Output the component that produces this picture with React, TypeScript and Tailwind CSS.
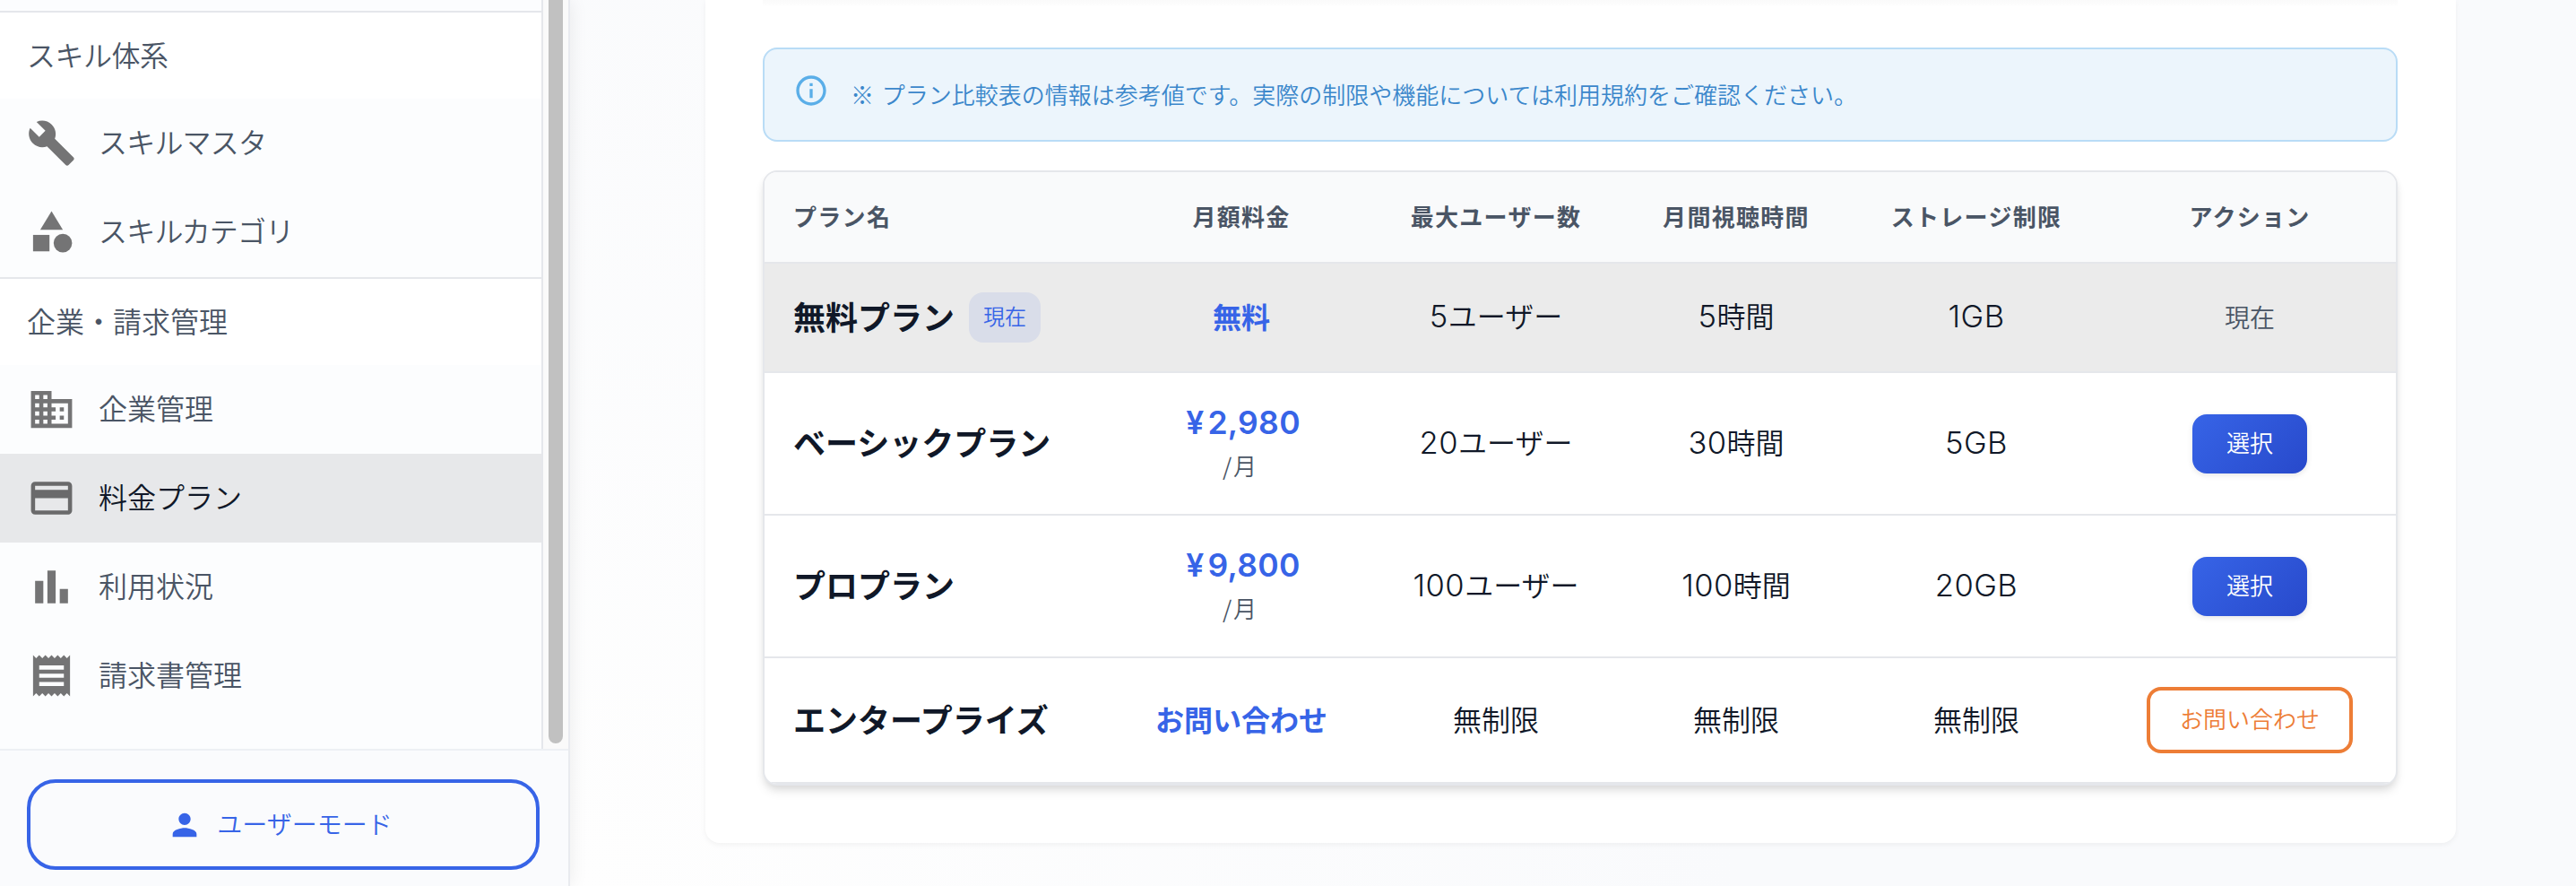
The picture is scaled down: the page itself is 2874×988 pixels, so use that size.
import type { ReactNode } from 'react';
import { MdBusiness, MdBuild, MdCategory, MdCreditCard, MdInfoOutline, MdPerson, MdReceipt } from 'react-icons/md';

function BarChartIcon({ className }: { className?: string }) {
  return (
    <svg className={className} viewBox="0 0 24 24" fill="currentColor">
      <path d="M4 9h4v11H4zm12 4h4v7h-4zm-6-9h4v16h-4z" />
    </svg>
  );
}

const icon = 'size-[55px] shrink-0 text-black/54';

const skillItems = [
  { label: 'スキルマスタ', icon: <MdBuild className={icon} />, kana: true },
  { label: 'スキルカテゴリ', icon: <MdCategory className={icon} />, kana: true },
];

const billingItems = [
  { label: '企業管理', icon: <MdBusiness className={icon} /> },
  { label: '料金プラン', icon: <MdCreditCard className={icon} />, active: true },
  { label: '利用状況', icon: <BarChartIcon className={icon} /> },
  { label: '請求書管理', icon: <MdReceipt className={icon} /> },
];

const plans = [
  { name: '無料プラン', price: '無料', users: ['5', 'ユーザー'], hours: ['5', '時間'], storage: ['1GB', ''], action: 'current' },
  { name: 'ベーシックプラン', price: '2,980', monthly: true, users: ['20', 'ユーザー'], hours: ['30', '時間'], storage: ['5GB', ''], action: 'select' },
  { name: 'プロプラン', price: '9,800', monthly: true, users: ['100', 'ユーザー'], hours: ['100', '時間'], storage: ['20GB', ''], action: 'select' },
  { name: 'エンタープライズ', price: 'お問い合わせ', users: ['', '無制限'], hours: ['', '無制限'], storage: ['', '無制限'], action: 'contact' },
];

const columns = 'grid grid-cols-[390px_284px_284px_252px_284px_326px] items-center';

function NavItem({ label, icon, active, kana }: { label: string; icon: ReactNode; active?: boolean; kana?: boolean }) {
  return (
    <div className={`flex h-[99px] items-center gap-[25px] pl-[30px] ${active ? 'bg-[#e7e8ea] text-gray-900' : 'text-gray-600'}`}>
      {icon}
      <span className={kana ? 'pb-[5px] tracking-[-0.8px]' : 'pb-[5px]'}>{label}</span>
    </div>
  );
}

function NavHeader({ label, kana }: { label: string; kana?: boolean }) {
  return (
    <div className="flex h-[98px] items-center border-t-2 border-gray-200 bg-white pb-1 pl-[30px] text-gray-600">
      <span className={kana ? 'tracking-[-0.5px]' : ''}>{label}</span>
    </div>
  );
}

function Value({ value }: { value: string[] }) {
  return (
    <div className="pb-[4px] text-center text-[32px] leading-[48px]">
      {value[0] && <span className="font-['Inter'] text-[34.5px] font-light tracking-[0.5px]">{value[0]}</span>}
      {value[1]}
    </div>
  );
}

function Action({ type }: { type: string }) {
  if (type === 'current') {
    return <span className="pb-[3px] text-[28px] text-gray-600">現在</span>;
  }
  if (type === 'select') {
    return (
      <button className="h-[66px] w-[128px] rounded-2xl bg-linear-135 from-[#3764e7] to-[#2849cb] pb-[4px] text-[26px] text-white shadow-[0_2px_6px_rgba(0,0,0,0.1)]">
        選択
      </button>
    );
  }
  return (
    <button className="h-[74px] w-[230px] rounded-2xl border-4 border-[#ed7d36] pb-[5px] text-[26px] text-[#ed7d36]">
      お問い合わせ
    </button>
  );
}

export default function App() {
  return (
    <div className="flex h-[988px] w-[2874px] overflow-hidden bg-[radial-gradient(circle_at_640px_100%,#fefefe,#f9fafc_1300px)] font-['Noto_Sans_CJK_JP',sans-serif] text-[32px] font-[350]">
      {/* サイドバー */}
      <aside className="z-10 flex w-[636px] shrink-0 flex-col border-r-2 border-[#e9ebef] bg-[#fcfdfe] shadow-[0_0_20px_rgba(0,0,0,0.08)]">
        <div className="flex h-[835px]">
          <nav className="w-[606px] border-r-2 border-gray-200">
            <div className="h-3" />
            <NavHeader label="スキル体系" kana />
            {skillItems.map((item) => (
              <NavItem key={item.label} {...item} />
            ))}
            <div className="h-px" />
            <NavHeader label="企業・請求管理" />
            {billingItems.map((item) => (
              <NavItem key={item.label} {...item} />
            ))}
          </nav>
          {/* スクロールバー */}
          <div className="flex w-7 bg-[#fafafa] pb-[6px] pl-[6px]">
            <div className="w-4 rounded-b-full bg-[#c1c1c1]" />
          </div>
        </div>
        <div className="flex-1 border-t-2 border-[#edf0f4] bg-[#fafbfd] px-[30px] pt-8">
          <button className="flex h-[101px] w-[572px] items-center justify-center rounded-[32px] border-4 border-[#3764e7] pr-2 text-[28px] text-[#3764e7]">
            <MdPerson className="mr-4 size-10" />
            <span className="pb-[4px]">ユーザーモード</span>
          </button>
        </div>
      </aside>

      {/* メイン */}
      <main className="pl-[151px]">
        <div className="h-[940px] w-[1953px] rounded-b-2xl bg-white px-16 shadow-[0_2px_6px_rgba(0,0,0,0.05)]">
          <div className="h-[53px] w-[1824px] bg-linear-to-b from-[#fafafa] to-white to-[8px]" />

          {/* 注意書き */}
          <div className="flex h-[105px] w-[1824px] rounded-2xl border-2 border-[#b9dcf6] bg-[#ecf5fc] pl-8 text-[26px] text-[#3b87cb]">
            <MdInfoOutline className="mt-[26px] mr-6 size-10 text-[#5aaee8]" />
            <p className="pt-[30px] leading-[40px] [word-spacing:3px]">
              ※ プラン比較表の情報は参考値です。実際の制限や機能については利用規約をご確認ください。
            </p>
          </div>

          {/* プラン比較表 */}
          <div className="mt-8 w-[1824px] overflow-hidden rounded-2xl border-2 border-gray-200 bg-white text-gray-900 shadow-[0_8px_12px_-2px_rgba(0,0,0,0.1),0_4px_8px_-2px_rgba(0,0,0,0.08)]">
            <div className={`${columns} h-[102px] border-b-2 border-gray-200 bg-gray-50 pb-[3px] text-center text-[26px] font-bold tracking-[0.05em] text-gray-600`}>
              <div className="pl-8 text-left">プラン名</div>
              <div>月額料金</div>
              <div>最大ユーザー数</div>
              <div>月間視聴時間</div>
              <div>ストレージ制限</div>
              <div>アクション</div>
            </div>
            {plans.map((plan) => (
              <div
                key={plan.name}
                className={`${columns} border-b-2 border-gray-200 ${plan.action === 'current' ? 'h-[122px] bg-[#ebebeb]' : plan.monthly ? 'h-[159px]' : 'h-[140px]'}`}
              >
                <div className="flex items-center gap-4 pl-8 text-[36px] font-bold">
                  <span className="pb-[5px]">{plan.name}</span>
                  {plan.action === 'current' && (
                    <span className="flex h-14 w-20 items-center justify-center rounded-2xl bg-[#d9dde9] pb-[4px] text-2xl font-[350] text-[#3764e7]">
                      現在
                    </span>
                  )}
                </div>
                <div className="pb-[4px] text-center font-bold text-[#3764e7]">
                  {plan.monthly ? (
                    <>
                      <div className="pl-1 font-['Inter'] text-[35.5px] leading-[52px] font-semibold tracking-[0.3px]">
                        <span className="mr-[4px]">¥</span>
                        {plan.price}
                      </div>
                      <div className="pr-1 text-[26px] leading-[42px] font-[350] text-gray-600">
                        <span className="mr-[2px]">/</span>月
                      </div>
                    </>
                  ) : (
                    plan.price
                  )}
                </div>
                <Value value={plan.users} />
                <Value value={plan.hours} />
                <Value value={plan.storage} />
                <div className="flex justify-center">
                  <Action type={plan.action} />
                </div>
              </div>
            ))}
          </div>
        </div>
      </main>
    </div>
  );
}
